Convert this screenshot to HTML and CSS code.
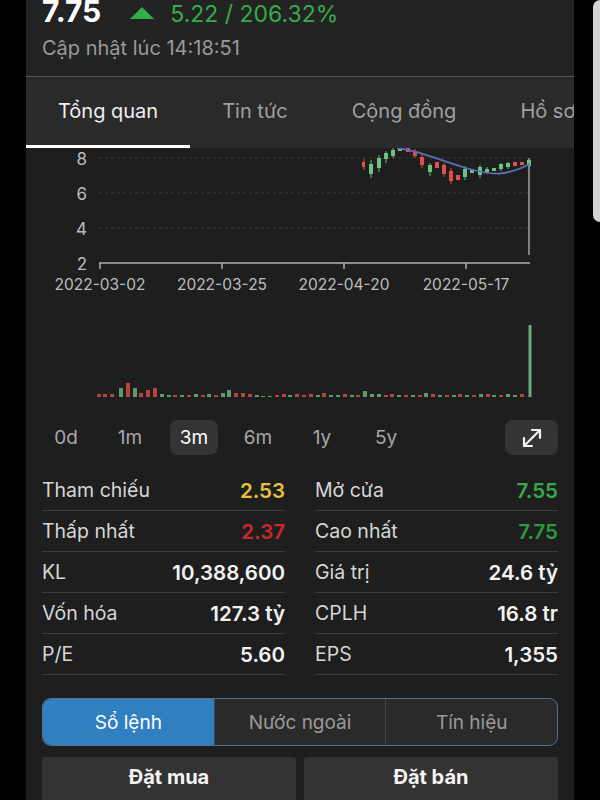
FILE: index.html
```html
<!DOCTYPE html>
<html>
<head>
  <title>Chi tiết cổ phiếu</title>
  <link rel="stylesheet" href="styles.css">
</head>

<body>
  <div class="screen">
    <div class="edge"></div>

    <div class="app">
      <div class="header">
        <div class="quote">
          <span class="price">7.75</span>
          <svg class="arrow-up" width="24" height="12" viewBox="0 0 24 12"><polygon points="0,12 12,0 24,12" fill="#2fb04b"/></svg>
          <span class="change">5.22 / 206.32%</span>
        </div>
        <div class="updated">Cập nhật lúc 14:18:51</div>
      </div>

      <div class="tabs">
        <div class="tab active">Tổng quan</div>
        <div class="tab">Tin tức</div>
        <div class="tab">Cộng đồng</div>
        <div class="tab">Hồ sơ</div>
      </div>

      <svg class="chart" width="548" height="270" viewBox="26 148 548 270">
        <!-- price grid -->
        <g stroke="#3a3a3a" stroke-width="1" stroke-dasharray="3 3">
          <line x1="99" y1="158" x2="530" y2="158"/>
          <line x1="99" y1="193" x2="530" y2="193"/>
          <line x1="99" y1="228" x2="530" y2="228"/>
        </g>
        <g fill="#bdbdbd" font-size="17" text-anchor="end" font-family="Inter, sans-serif">
          <text x="87" y="165">8</text>
          <text x="87" y="200">6</text>
          <text x="87" y="235">4</text>
          <text x="87" y="270">2</text>
        </g>
        <g stroke="#b0b0b0" stroke-width="1.5">
          <line x1="99" y1="263" x2="530" y2="263"/>
          <line x1="100" y1="263" x2="100" y2="269"/>
          <line x1="222" y1="263" x2="222" y2="269"/>
          <line x1="344" y1="263" x2="344" y2="269"/>
          <line x1="466" y1="263" x2="466" y2="269"/>
        </g>
        <g fill="#bdbdbd" font-size="15.5" text-anchor="middle" font-family="Inter, sans-serif">
          <text x="100" y="290">2022-03-02</text>
          <text x="222" y="290">2022-03-25</text>
          <text x="344" y="290">2022-04-20</text>
          <text x="466" y="290">2022-05-17</text>
        </g>

        <!-- candles -->
        <line x1="529" y1="158" x2="529" y2="255" stroke="#9aa6a0" stroke-width="1.5"/>
        <g stroke="#5fb976" stroke-width="1">
          <line x1="371" y1="160" x2="371" y2="178"/>
          <line x1="379" y1="155" x2="379" y2="172"/>
          <line x1="386" y1="151" x2="386" y2="163"/>
          <line x1="393" y1="148" x2="393" y2="158"/>
          <line x1="430" y1="163" x2="430" y2="176"/>
          <line x1="465" y1="166" x2="465" y2="180"/>
          <line x1="480" y1="165" x2="480" y2="178"/>
          <line x1="487" y1="167" x2="487" y2="174"/>
          <line x1="501" y1="163" x2="501" y2="171"/>
          <line x1="508" y1="162" x2="508" y2="169"/>
        </g>
        <g fill="#6cc283">
          <rect x="369" y="164" width="4" height="10"/>
          <rect x="377" y="158" width="4" height="10"/>
          <rect x="384" y="153" width="4" height="6"/>
          <rect x="391" y="150" width="4" height="6"/>
          <rect x="398" y="148" width="4" height="3"/>
          <rect x="428" y="165" width="4" height="7"/>
          <rect x="463" y="169" width="4" height="8"/>
          <rect x="470" y="170" width="4" height="3"/>
          <rect x="478" y="167" width="4" height="8"/>
          <rect x="485" y="169" width="4" height="3"/>
          <rect x="492" y="168" width="4" height="3"/>
          <rect x="499" y="164" width="4" height="5"/>
          <rect x="506" y="163" width="4" height="4"/>
          <rect x="527" y="160" width="4" height="6"/>
        </g>
        <g stroke="#d9514c" stroke-width="1">
          <line x1="364" y1="159" x2="364" y2="170"/>
          <line x1="415" y1="149" x2="415" y2="158"/>
          <line x1="422" y1="154" x2="422" y2="168"/>
          <line x1="444" y1="163" x2="444" y2="177"/>
          <line x1="451" y1="168" x2="451" y2="184"/>
        </g>
        <g fill="#e0504b">
          <rect x="362" y="162" width="3" height="5"/>
          <rect x="406" y="148" width="4" height="4"/>
          <rect x="413" y="151" width="4" height="5"/>
          <rect x="420" y="157" width="4" height="8"/>
          <rect x="435" y="162" width="4" height="6"/>
          <rect x="442" y="165" width="4" height="9"/>
          <rect x="449" y="171" width="4" height="10"/>
          <rect x="456" y="175" width="4" height="5"/>
          <rect x="513" y="162" width="4" height="4"/>
          <rect x="520" y="162" width="4" height="3"/>
        </g>
        <path d="M397 148 C418 150 438 160 466 168 S506 176 530 164" fill="none" stroke="#5b6db6" stroke-width="1.8"/>

        <!-- volume -->
        <path stroke="#5a9a6c" stroke-width="4" d="M121 397V388 M135 397V388 M162 397V394 M169 397V395 M182 397V395 M196 397V394 M209 397V394 M223 397V393 M229 397V390 M257 397V395 M263 397V396 M270 397V396 M290 397V395 M318 397V395 M331 397V395 M338 397V395 M352 397V395 M365 397V391 M372 397V394 M379 397V394 M399 397V395 M413 397V395 M426 397V393 M440 397V395 M454 397V395 M467 397V395 M481 397V394 M494 397V395 M508 397V394 M515 397V395"/>
        <path stroke="#b4463f" stroke-width="4" d="M99 397V394 M105 397V394 M112 397V394 M128 397V383 M141 397V393 M148 397V390 M155 397V388 M175 397V395 M189 397V395 M203 397V395 M216 397V395 M236 397V393 M243 397V393 M250 397V394 M277 397V395 M284 397V394 M297 397V394 M304 397V395 M311 397V394 M324 397V393 M345 397V394 M358 397V395 M386 397V395 M392 397V394 M406 397V395 M420 397V395 M433 397V394 M447 397V395 M460 397V394 M474 397V395 M488 397V394 M501 397V395 M522 397V394"/>
        <line x1="530" y1="325" x2="530" y2="397" stroke="#6aa882" stroke-width="3"/>
      </svg>

      <div class="periods">
        <div class="period">0d</div>
        <div class="period">1m</div>
        <div class="period active">3m</div>
        <div class="period">6m</div>
        <div class="period">1y</div>
        <div class="period">5y</div>
        <div class="expand">
          <svg width="26" height="26" viewBox="0 0 26 26" fill="none" stroke="#f2f2f2" stroke-width="2.2" stroke-linecap="round" stroke-linejoin="round">
            <path d="M5 21 L21 5 M13 5 H21 V13 M5 13 V21 H13"/>
          </svg>
        </div>
      </div>

      <div class="stats">
        <div class="stat"><span class="stat-label">Tham chiếu</span><span class="stat-value ref">2.53</span></div>
        <div class="stat"><span class="stat-label">Mở cửa</span><span class="stat-value up">7.55</span></div>
        <div class="stat"><span class="stat-label">Thấp nhất</span><span class="stat-value down">2.37</span></div>
        <div class="stat"><span class="stat-label">Cao nhất</span><span class="stat-value up-dark">7.75</span></div>
        <div class="stat"><span class="stat-label">KL</span><span class="stat-value">10,388,600</span></div>
        <div class="stat"><span class="stat-label">Giá trị</span><span class="stat-value">24.6 tỷ</span></div>
        <div class="stat"><span class="stat-label">Vốn hóa</span><span class="stat-value">127.3 tỷ</span></div>
        <div class="stat"><span class="stat-label">CPLH</span><span class="stat-value">16.8 tr</span></div>
        <div class="stat"><span class="stat-label">P/E</span><span class="stat-value">5.60</span></div>
        <div class="stat"><span class="stat-label">EPS</span><span class="stat-value">1,355</span></div>
      </div>

      <div class="segments">
        <div class="seg active">Sổ lệnh</div>
        <div class="seg">Nước ngoài</div>
        <div class="seg">Tín hiệu</div>
      </div>

      <div class="orders">
        <div class="order">Đặt mua</div>
        <div class="order">Đặt bán</div>
      </div>
    </div>

    <div class="edge edge-right">
      <div class="pill"></div>
    </div>
  </div>
</body>
</html>
```

FILE: styles.css
```css
* {
  box-sizing: border-box;
}

body {
  margin: 0;
  background: #000;
  font-family: Inter, "Noto Sans", sans-serif;
  color: #e6e6e6;
}

.screen {
  display: flex;
  height: 800px;
  overflow: hidden;
}

.edge {
  width: 26px;
  flex-shrink: 0;
}

.edge-right {
  display: flex;
  justify-content: flex-end;
}

.pill {
  width: 7px;
  height: 222px;
  background: #d4d4d4;
  border-radius: 7px 0 0 7px;
}

.app {
  width: 548px;
  flex-shrink: 0;
  display: flex;
  flex-direction: column;
  background: #1e1e1e;
  overflow: hidden;
}

/* header */

.header {
  flex-shrink: 0;
  height: 77px;
  padding: 0 16px;
  background: #232323;
  border-bottom: 1px solid #555;
}

.quote {
  display: flex;
  align-items: baseline;
  height: 30px;
  margin-top: -4px;
}

.price {
  font-size: 30px;
  line-height: 30px;
  font-weight: 700;
  color: #fff;
}

.arrow-up {
  align-self: center;
  margin: 4px 16px 0 29px;
}

.change {
  font-size: 23px;
  color: #33ad4a;
}

.updated {
  margin-top: 10px;
  font-size: 20px;
  line-height: 24px;
  color: #9a9a9a;
}

/* tabs */

.tabs {
  flex-shrink: 0;
  display: flex;
  height: 71px;
  background: #2a2a2a;
  overflow: hidden;
  white-space: nowrap;
}

.tab {
  flex-shrink: 0;
  display: flex;
  align-items: center;
  padding: 0 32px;
  font-size: 20px;
  color: #a0a0a0;
  border-bottom: 3px solid transparent;
}

.tab.active {
  color: #efefef;
  border-bottom-color: #fff;
}

/* chart */

.chart {
  display: block;
  flex-shrink: 0;
}

.periods {
  flex-shrink: 0;
  display: flex;
  align-items: center;
  gap: 16px;
  height: 35px;
  margin-top: 2px;
  padding: 0 16px;
}

.period {
  width: 48px;
  height: 35px;
  display: flex;
  align-items: center;
  justify-content: center;
  border-radius: 8px;
  font-size: 19px;
  color: #a8a8a8;
}

.period.active {
  background: #343434;
  color: #fff;
}

.expand {
  margin-left: auto;
  width: 53px;
  height: 35px;
  display: flex;
  align-items: center;
  justify-content: center;
  border-radius: 8px;
  background: #343434;
}

/* stats */

.stats {
  flex-shrink: 0;
  display: grid;
  grid-template-columns: 1fr 1fr;
  column-gap: 30px;
  margin-top: 15px;
  padding: 0 16px;
}

.stat {
  display: flex;
  align-items: center;
  justify-content: space-between;
  height: 41px;
  border-bottom: 1px solid #3c3c3c;
  font-size: 19.5px;
}

.stat-label {
  color: #d6d6d6;
}

.stat-value {
  font-size: 20.5px;
  font-weight: 600;
  color: #f2f2f2;
}

.stat-value.ref {
  color: #e6c23c;
}

.stat-value.down {
  color: #c82a2a;
}

.stat-value.up {
  color: #35a84c;
}

.stat-value.up-dark {
  color: #2c9a3f;
}

/* order book switch */

.segments {
  flex-shrink: 0;
  display: flex;
  height: 48px;
  margin: 23px 16px 0;
  border: 1.5px solid #55718d;
  border-radius: 9px;
  background: #2a2a2a;
  overflow: hidden;
}

.seg {
  flex: 1;
  display: flex;
  align-items: center;
  justify-content: center;
  font-size: 19px;
  color: #9a9a9a;
  border-left: 1px solid #444;
}

.seg.active {
  background: #2f7fc1;
  color: #fff;
  border-left: none;
}

.orders {
  flex-shrink: 0;
  display: flex;
  gap: 8px;
  margin: 11px 16px 0;
}

.order {
  flex: 1;
  height: 48px;
  padding-top: 8px;
  text-align: center;
  font-size: 20px;
  line-height: 24px;
  font-weight: 700;
  color: #f4f4f4;
  background: #333;
  border-radius: 3px 3px 0 0;
}
```
